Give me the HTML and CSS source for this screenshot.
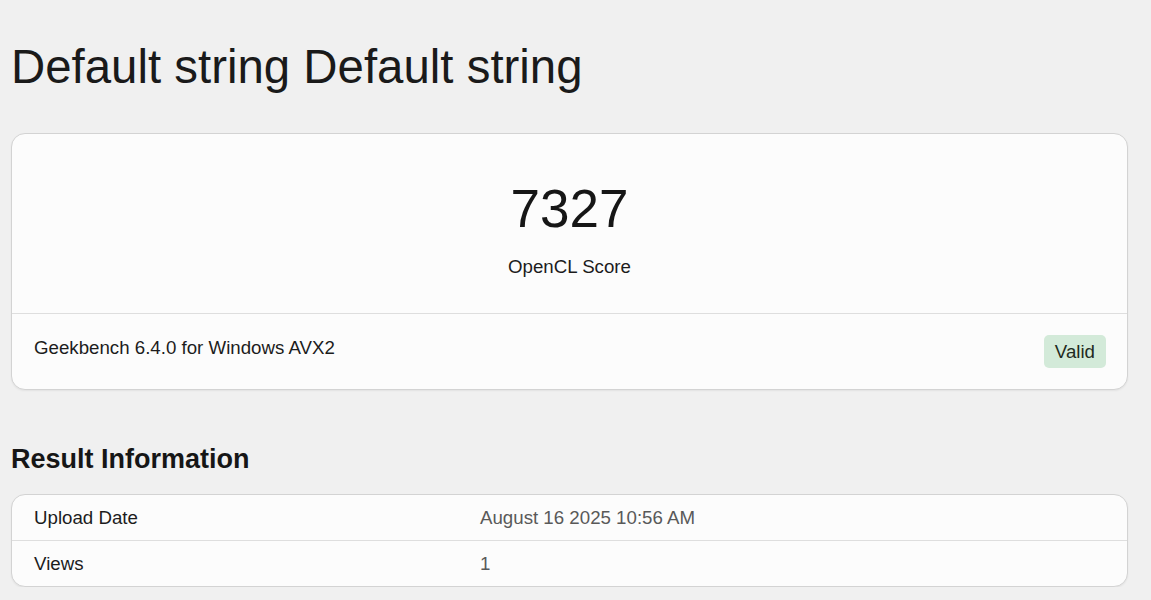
FILE: index.html
```html
<!DOCTYPE html>
<html>
<head>
<meta charset="utf-8">
<link rel="stylesheet" href="styles.css">
</head>
<body>
<main class="page">
  <h1 class="title">Default string Default string</h1>
  <section class="card score-card">
    <div class="score-top">
      <div class="score">7327</div>
      <div class="score-label">OpenCL Score</div>
    </div>
    <div class="score-bottom">
      <div class="version">Geekbench 6.4.0 for Windows AVX2</div>
      <span class="badge">Valid</span>
    </div>
  </section>
  <h2 class="section-title">Result Information</h2>
  <section class="card info-card">
    <div class="info-row">
      <div class="info-name">Upload Date</div>
      <div class="info-value">August 16 2025 10:56 AM</div>
    </div>
    <div class="info-row">
      <div class="info-name">Views</div>
      <div class="info-value">1</div>
    </div>
  </section>
</main>
</body>
</html>
```

FILE: styles.css
```css
* { box-sizing: border-box; }
html, body {
  margin: 0;
  padding: 0;
  background: #f0f0f0;
  font-family: "Liberation Sans", Arial, sans-serif;
  color: #1c1c1c;
}
.page {
  padding: 0 23px 0 11px;
}
.title {
  margin: 0;
  padding-top: 40px;
  font-size: 47.4px;
  line-height: 54px;
  font-weight: 400;
  color: #1a1a1a;
}
.card {
  background: #fcfcfc;
  border: 1px solid #d3d3d3;
  border-radius: 14px;
  box-shadow: 0 1px 2px rgba(0,0,0,0.06);
}
.score-card {
  margin-top: 39px;
}
.score-top {
  padding: 43px 22px 35px;
  text-align: center;
  border-bottom: 1px solid #dedede;
}
.score {
  font-size: 53px;
  line-height: 64px;
  color: #161616;
}
.score-label {
  margin-top: 15px;
  font-size: 18.7px;
  line-height: 22px;
}
.score-bottom {
  display: flex;
  justify-content: space-between;
  align-items: flex-start;
  padding: 21px 21px 21px 22px;
}
.version {
  padding-top: 2px;
  font-size: 18.7px;
  line-height: 22px;
}
.badge {
  display: inline-flex;
  align-items: center;
  height: 33px;
  padding: 1px 11px 0;
  background: #d3ead9;
  border-radius: 5px;
  font-size: 18.7px;
  color: #1f2a22;
}
.section-title {
  margin: 53px 0 0;
  font-size: 27px;
  line-height: 32px;
  font-weight: 700;
  color: #161616;
}
.info-card {
  margin-top: 19px;
  overflow: hidden;
}
.info-row {
  display: grid;
  grid-template-columns: 40% 60%;
  font-size: 18.7px;
  line-height: 22px;
}
.info-row + .info-row {
  border-top: 1px solid #dedede;
}
.info-name, .info-value {
  padding: 12px 22px 11px;
}
.info-value {
  color: #595959;
}
```
